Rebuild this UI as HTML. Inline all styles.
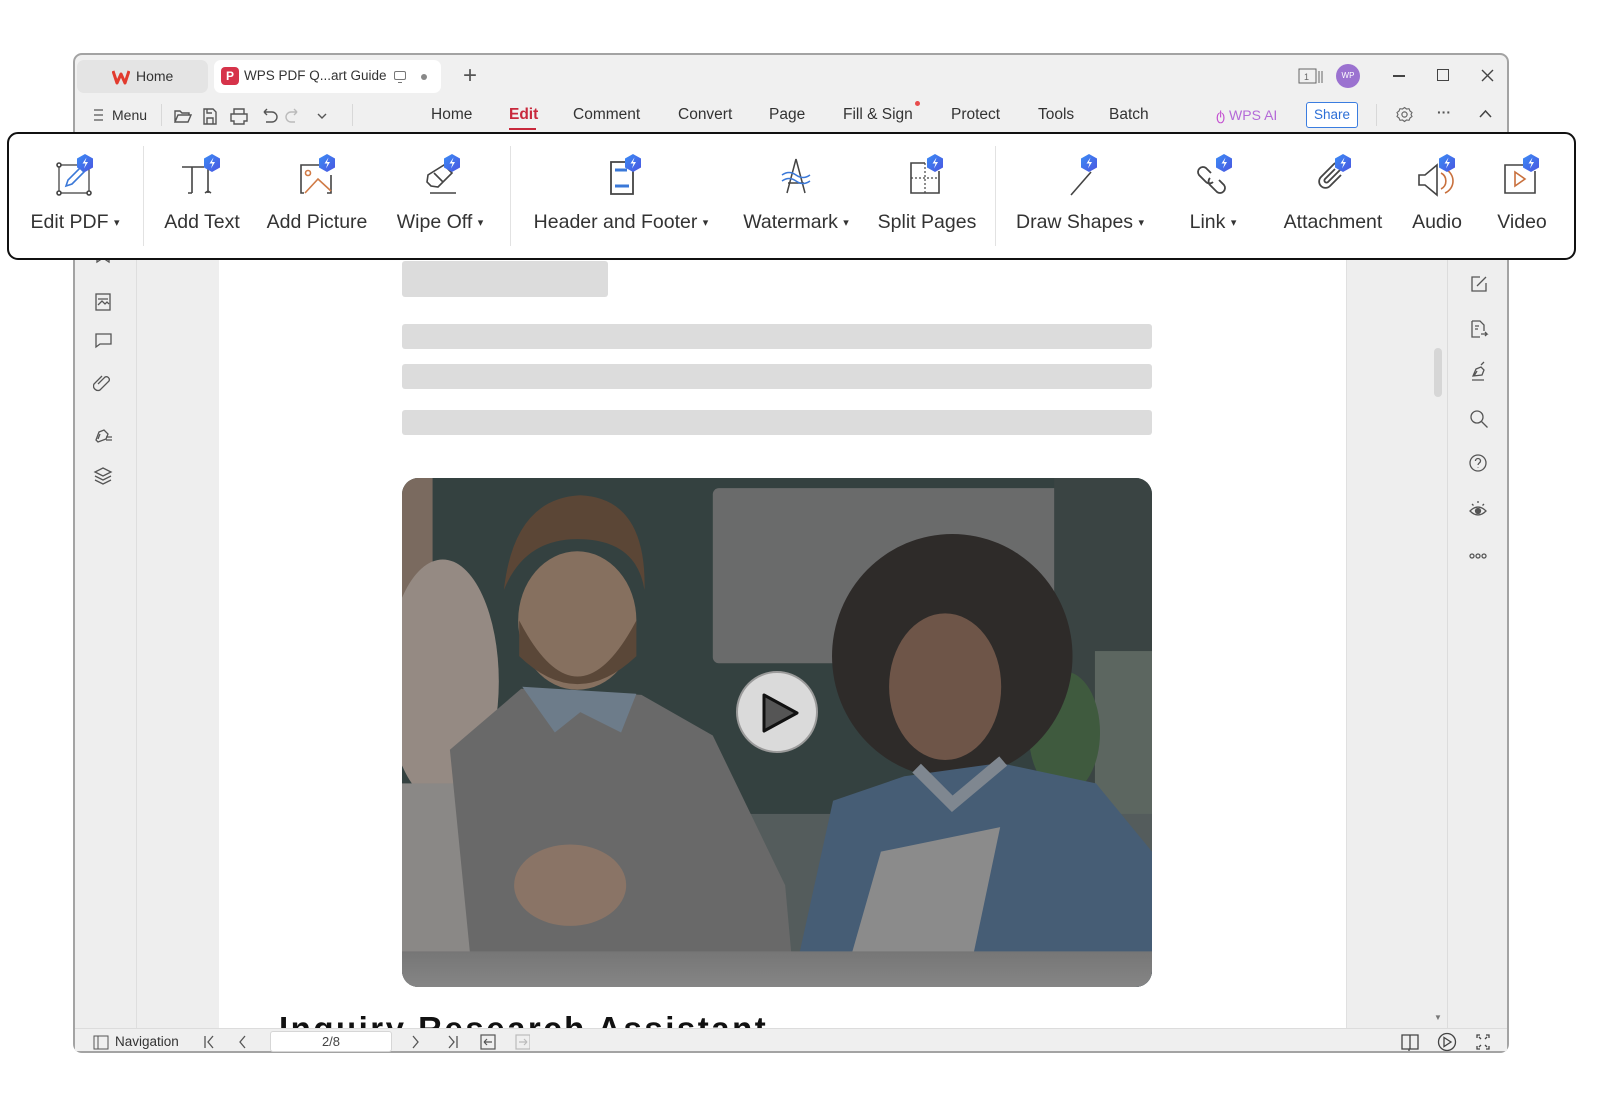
<!DOCTYPE html>
<html><head><meta charset="utf-8"><style>
*{margin:0;padding:0;box-sizing:border-box}
body{width:1600px;height:1100px;background:#fff;position:relative;overflow:hidden;font-family:"Liberation Sans",sans-serif;color:#333}
.a{position:absolute}
.win{left:73px;top:53px;width:1436px;height:1000px;border:2px solid #a3a3a3;border-radius:9px;background:#f0f0f0;overflow:hidden}
.t{position:absolute;font-size:14px;color:#333;white-space:nowrap}
.m{position:absolute;top:106px;font-size:15.5px;color:#333;white-space:nowrap}
.lbl{position:absolute;top:211px;font-size:19.5px;color:#333;white-space:nowrap;transform:translateX(-50%)}
.ic{position:absolute;top:153px;width:44px;height:44px}
.sep{position:absolute;top:146px;width:1px;height:100px;background:#e2e2e2}
.bar{position:absolute;background:#dcdcdc;border-radius:3px}
.car{font-size:11px;vertical-align:2px}
</style></head><body>
<div class="a win"></div>
<!-- tabs -->
<div class="a" style="left:77px;top:60px;width:131px;height:33px;background:#e4e4e4;border-radius:7px"></div>
<svg class="a" style="left:112px;top:69px" width="18" height="16" viewBox="0 0 18 16"><path d="M1 2 L5 14 L9 5 L13 14 L17 2" fill="none" stroke="#e23b2e" stroke-width="3" stroke-linejoin="round"/></svg>
<div class="t" style="left:136px;top:68px">Home</div>
<div class="a" style="left:214px;top:60px;width:227px;height:33px;background:#fff;border-radius:7px"></div>
<div class="a" style="left:221px;top:67px;width:18px;height:18px;background:#d6334a;border-radius:4px;color:#fff;font-size:12px;font-weight:bold;text-align:center;line-height:18px">P</div>
<div class="t" style="left:244px;top:68px;font-size:13.5px">WPS PDF Q...art Guide</div>
<svg class="a" style="left:393px;top:70px" width="14" height="14"><rect x="1.5" y="1.5" width="11" height="8" rx="1.5" fill="none" stroke="#777"/><path d="M5 12.5h4" stroke="#777"/></svg>
<div class="a" style="left:421px;top:74px;width:6px;height:6px;border-radius:3px;background:#888"></div>
<div class="t" style="left:463px;top:62px;font-size:24px;color:#555">+</div>
<!-- top right -->
<svg class="a" style="left:1298px;top:67px" width="26" height="18"><rect x="1" y="2" width="17" height="14" fill="none" stroke="#666"/><text x="6" y="13" font-size="9" fill="#666" font-family="Liberation Sans">1</text><path d="M21 4v12M24 4v12" stroke="#666"/></svg>
<div class="a" style="left:1336px;top:64px;width:24px;height:24px;border-radius:12px;background:#9b72d0;color:#fff;font-size:8px;text-align:center;line-height:24px">WP</div>
<div class="a" style="left:1393px;top:75px;width:12px;height:1.5px;background:#444"></div>
<div class="a" style="left:1437px;top:69px;width:12px;height:12px;border:1.5px solid #444"></div>
<svg class="a" style="left:1481px;top:69px" width="13" height="13"><path d="M1 1L12 12M12 1L1 12" stroke="#444" stroke-width="1.4"/></svg>
<!-- menu row -->
<svg class="a" style="left:93px;top:108px" width="12" height="14"><path d="M1 2h9M1 7h9M1 12h9" stroke="#555" stroke-width="1.3"/></svg>
<div class="t" style="left:112px;top:107px">Menu</div>
<div class="a" style="left:161px;top:104px;width:1px;height:22px;background:#d8d8d8"></div>
<svg class="a" style="left:172px;top:104px" width="180" height="24" viewBox="0 0 180 24" fill="none" stroke="#555" stroke-width="1.4">
<path d="M3 18V7h5l2 2h7v2M3 18l3-7h13l-3 7z"/>
<path d="M32 5h9l3 3v12H32zM35 20v-6h6v6M35 5v4h5"/>
<path d="M62 10V5h10v5M59 10h16v7h-3v3H62v-3h-3z"/>
<path d="M92 8h8a5 5 0 010 10h-6M92 8l3-3M92 8l3 3"/>
<path d="M125 8h-6a5 5 0 000 10h4M125 8l-3-3M125 8l-3 3" stroke="#bbb"/>
<path d="M146 10l4 4 4-4"/>
</svg>
<div class="a" style="left:352px;top:104px;width:1px;height:22px;background:#d8d8d8"></div>
<div class="m" style="left:431px">Home</div>
<div class="m" style="left:509px;color:#c8283c;font-weight:bold">Edit</div>
<div class="a" style="left:509px;top:128px;width:27px;height:2px;background:#c8283c"></div>
<div class="m" style="left:573px">Comment</div>
<div class="m" style="left:678px">Convert</div>
<div class="m" style="left:769px">Page</div>
<div class="m" style="left:843px">Fill &amp; Sign</div>
<div class="a" style="left:915px;top:101px;width:5px;height:5px;border-radius:3px;background:#e84c4c"></div>
<div class="m" style="left:951px">Protect</div>
<div class="m" style="left:1038px">Tools</div>
<div class="m" style="left:1109px">Batch</div>
<div class="t" style="left:1216px;top:107px;color:#b46ad8"><span style="color:#c34fd0">ტ</span> WPS AI</div>
<div class="a" style="left:1306px;top:102px;width:52px;height:26px;border:1px solid #3b7de0;border-radius:3px;color:#2d6fd6;font-size:13.5px;text-align:center;line-height:24px;background:#fff">Share</div>
<div class="a" style="left:1376px;top:104px;width:1px;height:22px;background:#d8d8d8"></div>
<svg class="a" style="left:1396px;top:106px" width="17" height="17"><circle cx="8.5" cy="8.5" r="2.6" fill="none" stroke="#666" stroke-width="1.2"/><path d="M8.5 1.5l2 1.5 2.5-.3 1 2.3 2 1.5-1 2 1 2-2 1.5-1 2.3-2.5-.3-2 1.5-2-1.5-2.5.3-1-2.3-2-1.5 1-2-1-2 2-1.5 1-2.3 2.5.3z" fill="none" stroke="#666" stroke-width="1.1"/></svg>
<div class="t" style="left:1437px;top:104px;font-weight:bold;color:#555">···</div>
<svg class="a" style="left:1479px;top:109px" width="13" height="9"><path d="M1 8l5.5-6 5.5 6" fill="none" stroke="#444" stroke-width="1.5"/></svg>

<!-- body panels -->
<div class="a" style="left:75px;top:259px;width:61px;height:769px;background:#eeeeee"></div>
<div class="a" style="left:136px;top:259px;width:1px;height:769px;background:#dedede"></div>
<div class="a" style="left:137px;top:259px;width:82px;height:769px;background:#eeeeee"></div>
<div class="a" style="left:219px;top:259px;width:1127px;height:769px;background:#fff;overflow:hidden">
  <div class="bar" style="left:183px;top:2px;width:206px;height:36px"></div>
  <div class="bar" style="left:183px;top:65px;width:750px;height:25px"></div>
  <div class="bar" style="left:183px;top:105px;width:750px;height:25px"></div>
  <div class="bar" style="left:183px;top:151px;width:750px;height:25px"></div>
  <div class="a" style="left:60px;top:751px;font-size:33px;font-weight:bold;color:#111;letter-spacing:2.5px;white-space:nowrap">Inquiry Research Assistant</div>
</div>
<!-- photo -->
<svg class="a" style="left:402px;top:478px" width="750" height="509" viewBox="0 0 736 500" preserveAspectRatio="none">
<defs><clipPath id="cp"><rect width="736" height="500" rx="16"/></clipPath>
<linearGradient id="tb" x1="0" y1="0" x2="0" y2="1"><stop offset="0" stop-color="#767676"/><stop offset="1" stop-color="#858585"/></linearGradient></defs>
<g clip-path="url(#cp)">
<rect width="736" height="500" fill="#344140"/>
<rect x="305" y="10" width="378" height="172" rx="6" fill="#6a6b6b"/>
<rect x="640" y="0" width="96" height="500" fill="#3a4443"/>
<rect x="680" y="170" width="56" height="300" fill="#5c6660"/>
<ellipse cx="650" cy="250" rx="35" ry="60" fill="#3f5a3e"/>
<rect x="0" y="330" width="736" height="170" fill="#545c5c"/>
<rect x="0" y="0" width="30" height="120" fill="#7a6a5f"/>
<ellipse cx="40" cy="200" rx="55" ry="120" fill="#958a83"/>
<rect x="0" y="300" width="90" height="200" fill="#8a8886"/>
<path d="M47 267 L117 207 L235 213 L305 253 L376 400 L385 500 L70 500 Z" fill="#696969"/>
<path d="M118 205 L150 250 L175 230 L215 250 L230 212 Z" fill="#6d7c8a"/>
<ellipse cx="172" cy="140" rx="58" ry="68" fill="#86705f"/>
<path d="M115 140 Q172 250 230 140 L230 175 Q172 230 115 175Z" fill="#5a4738"/>
<path d="M100 110 Q110 20 175 17 Q240 20 238 110 Q230 60 172 60 Q120 60 100 110Z" fill="#5b4636"/>
<ellipse cx="165" cy="400" rx="55" ry="40" fill="#8a7466"/>
<ellipse cx="540" cy="175" rx="118" ry="120" fill="#2e2b29"/>
<path d="M390 467 L423 317 L493 293 L587 280 L681 300 L736 367 L736 500 L390 500Z" fill="#465d75"/>
<ellipse cx="533" cy="205" rx="55" ry="72" fill="#6e5548"/>
<path d="M505 285 L540 320 L590 278" fill="none" stroke="#7f8790" stroke-width="12"/>
<path d="M470 367 L587 343 L554 500 L432 500Z" fill="#8b8b8b"/>
<rect x="0" y="465" width="736" height="35" fill="url(#tb)"/>
</g></svg>
<div class="a" style="left:736px;top:671px;width:82px;height:82px;border-radius:41px;background:#dadada;border:2px solid #9a9a9a"></div>
<svg class="a" style="left:757px;top:690px" width="46" height="46"><path d="M7 5 L40 23 L7 41 Z" fill="#555" stroke="#111" stroke-width="3" stroke-linejoin="round"/></svg>

<div class="a" style="left:1346px;top:259px;width:101px;height:769px;background:#eeeeee;border-left:1px solid #e0e0e0"></div>
<div class="a" style="left:1447px;top:259px;width:60px;height:769px;background:#eeeeee;border-left:1px solid #dcdcdc"></div>
<div class="a" style="left:1434px;top:348px;width:8px;height:49px;border-radius:4px;background:#d6d6d6"></div>
<div class="a" style="left:1434px;top:1013px;font-size:8px;color:#777">▼</div>

<!-- left icons -->
<svg class="a" style="left:93px;top:248px" width="22" height="250" fill="none" stroke="#555" stroke-width="1.3">
<path d="M4 2v12l6-4 6 4V2"/>
<rect x="3" y="46" width="14" height="16"/><path d="M5 57l4-4 3 3 2-2 2 2M5 51h10"/>
<path d="M3 86h15v10H7l-4 3z"/>
<path d="M5 140l7-7a3 3 0 014 4l-9 9a4.5 4.5 0 01-6-6l8-8" transform="translate(0,-4)"/>
<path d="M3 192l3-8 5-2 4 4-2 5-8 3zM7 186l-2 5M13 189h6M13 192h6"/>
<path d="M10 220l8 4-8 4-8-4zM2 228l8 4 8-4M2 232l8 4 8-4"/>
</svg>
<!-- right icons -->
<svg class="a" style="left:1468px;top:274px" width="22" height="295" fill="none" stroke="#555" stroke-width="1.3">
<path d="M12 3H4v14h14V9M9 12l9-9"/>
<path d="M4 47h8l4 4v6M4 47v16h8M7 52h4M7 55h3M13 60h6l-2-2M19 60l-2 2"/>
<path d="M5 102l3-7 5-2 3 3-2 5zM9 97l-3 5M4 106h12M13 91l3-3"/>
<circle cx="9" cy="143" r="6"/><path d="M13.5 147.5l6 6"/>
<circle cx="10" cy="189" r="8"/><path d="M7.5 187a2.5 2.5 0 115 0c0 2-2.5 2-2.5 4M10 193v.5"/>
<path d="M2 237q8-8 16 0q-8 8-16 0z"/><circle cx="10" cy="237" r="2.5" fill="#555"/><path d="M10 227v2M4 230l1.5 1.5M16 230l-1.5 1.5"/>
<circle cx="4" cy="282" r="2"/><circle cx="10" cy="282" r="2"/><circle cx="16" cy="282" r="2"/>
</svg>

<!-- status bar -->
<div class="a" style="left:75px;top:1028px;width:1432px;height:23px;background:#efefef;border-top:1px solid #dcdcdc"></div>
<svg class="a" style="left:93px;top:1035px" width="16" height="15"><rect x="1" y="1" width="14" height="13" fill="none" stroke="#555"/><path d="M5 1v13" stroke="#555"/></svg>
<div class="t" style="left:115px;top:1034px;font-size:13.5px">Navigation</div>
<svg class="a" style="left:203px;top:1034px" width="270" height="16" fill="none" stroke="#555" stroke-width="1.3">
<path d="M2 2v12M10 2l-5 6 5 6M42 2l-5 6 5 6M210 2l5 6-5 6M246 2l5 6-5 6M254 2v12"/>
</svg>
<div class="a" style="left:270px;top:1031px;width:122px;height:21px;background:#fff;border:1px solid #d6d6d6;border-radius:3px;text-align:center;font-size:13px;line-height:19px;color:#444">2/8</div>
<svg class="a" style="left:480px;top:1034px" width="50" height="16" fill="none" stroke-width="1.2"><rect x="1" y="1" width="14" height="14" stroke="#555"/><path d="M4 8h8M4 8l3-3M4 8l3 3" stroke="#555"/><rect x="36" y="1" width="14" height="14" stroke="#bbb"/><path d="M47 8h-8M47 8l-3-3M47 8l-3 3" stroke="#bbb"/></svg>
<svg class="a" style="left:1400px;top:1032px" width="100" height="20" fill="none" stroke="#444" stroke-width="1.3">
<path d="M2 3h8v14H2zM10 3h8v14h-8M9 17v2"/>
<circle cx="47" cy="10" r="8.5"/><path d="M44 5.5l7 4.5-7 4.5z"/>
<path d="M77 6V3h3M86 3h3v3M89 14v3h-3M80 17h-3v-3M81 7l-2-2M85 7l2-2M85 13l2 2M81 13l-2 2"/>
</svg>

<!-- toolbar -->
<div class="a" style="left:7px;top:132px;width:1569px;height:128px;border:2.5px solid #111;border-radius:11px;background:#fff"></div>
<div class="sep" style="left:143px"></div>
<div class="sep" style="left:510px"></div>
<div class="sep" style="left:995px"></div>

<svg width="0" height="0" style="position:absolute"><defs>
<linearGradient id="bg" x1="0" y1="0" x2="1" y2="1"><stop offset="0" stop-color="#3b8cf5"/><stop offset="1" stop-color="#4a55e0"/></linearGradient>
<g id="bd"><path d="M32 1l8 4.5v9L32 19l-8-4.5v-9z" fill="url(#bg)"/><path d="M33.5 4.5L29.5 10.5h3l-1.5 5 4-6.5h-3z" fill="#fff"/></g>
</defs></svg>

<svg class="ic" style="left:53px" viewBox="0 0 44 44" fill="none" stroke="#444" stroke-width="1.6">
<rect x="6" y="12" width="30" height="28" stroke-width="1.3"/><circle cx="6" cy="12" r="2" fill="#fff"/><circle cx="6" cy="40" r="2" fill="#fff"/><circle cx="36" cy="40" r="2" fill="#fff"/>
<path d="M13 33l2-6 12-12 4 4-12 12z" stroke="#3a78d8"/><use href="#bd" stroke="none"/></svg>
<div class="lbl" style="left:75px">Edit PDF <span class="car">▾</span></div>
<svg class="ic" style="left:180px" viewBox="0 0 44 44" fill="none" stroke="#444" stroke-width="1.6">
<path d="M2 14h22M12 14v26M8 40h4M28 14v26M25 40l3-2 3 2"/><use href="#bd" stroke="none"/></svg>
<div class="lbl" style="left:202px">Add Text</div>
<svg class="ic" style="left:295px" viewBox="0 0 44 44" fill="none" stroke="#444" stroke-width="1.6">
<path d="M24 12H6v28h3M36 22v18h-4"/><circle cx="13" cy="20" r="2.5" stroke="#d07a45"/><path d="M10 40l13-14 13 12" stroke="#d07a45"/><use href="#bd" stroke="none"/></svg>
<div class="lbl" style="left:317px">Add Picture</div>
<svg class="ic" style="left:420px" viewBox="0 0 44 44" fill="none" stroke="#444" stroke-width="1.6">
<path d="M24 12l8 8-14 14-7-1-4-4 1-7zM14 20l9 9M10 40h26"/><use href="#bd" stroke="none"/></svg>
<div class="lbl" style="left:440px">Wipe Off <span class="car">▾</span></div>
<svg class="ic" style="left:601px" viewBox="0 0 44 44" fill="none" stroke="#444" stroke-width="1.8">
<path d="M26 9H10v32h22V16"/><path d="M14 17h12M14 33h14" stroke="#3a78d8" stroke-width="3"/><use href="#bd" stroke="none"/></svg>
<div class="lbl" style="left:621px">Header and Footer <span class="car">▾</span></div>
<svg class="ic" style="left:774px" viewBox="0 0 44 44" fill="none" stroke="#444" stroke-width="1.5">
<path d="M22 6l-9 34M22 6l9 34M14 30h16"/><path d="M8 22q7-5 14 0t14 0M8 28q7-5 14 0t14 0" stroke="#3a78d8"/></svg>
<div class="lbl" style="left:796px">Watermark <span class="car">▾</span></div>
<svg class="ic" style="left:903px" viewBox="0 0 44 44" fill="none" stroke="#444" stroke-width="1.6">
<path d="M22 10H8v30h28V18"/><path d="M22 10v30M8 25h28" stroke-dasharray="2 2" stroke-width="1.2"/><use href="#bd" stroke="none"/></svg>
<div class="lbl" style="left:927px">Split Pages</div>
<svg class="ic" style="left:1063px" viewBox="0 0 44 44" fill="none" stroke="#444" stroke-width="1.6">
<path d="M28 19L8 42"/><use href="#bd" stroke="none" transform="translate(-6,0)"/></svg>
<div class="lbl" style="left:1080px">Draw Shapes <span class="car">▾</span></div>
<svg class="ic" style="left:1192px" viewBox="0 0 44 44" fill="none" stroke="#444" stroke-width="1.8">
<path d="M19 20l-5-5a5 5 0 00-7 7l7 7a5 5 0 007 0"/><path d="M23 23l5 5a5 5 0 01-7 7l-7-7a5 5 0 010-7" transform="translate(4,4)"/><use href="#bd" stroke="none"/></svg>
<div class="lbl" style="left:1213px">Link <span class="car">▾</span></div>
<svg class="ic" style="left:1311px" viewBox="0 0 44 44" fill="none" stroke="#444" stroke-width="1.8">
<path d="M30 22L19 33a6 6 0 01-9-9l13-13a4 4 0 016 6L17 29a2 2 0 01-3-3l10-10"/><use href="#bd" stroke="none"/></svg>
<div class="lbl" style="left:1333px">Attachment</div>
<svg class="ic" style="left:1415px" viewBox="0 0 44 44" fill="none" stroke="#444" stroke-width="1.6">
<path d="M4 22h6l12-10v30l-12-10H4z"/><path d="M26 20a9 9 0 010 16M30 16a13 13 0 010 24" stroke="#c8703d"/><use href="#bd" stroke="none"/></svg>
<div class="lbl" style="left:1437px">Audio</div>
<svg class="ic" style="left:1499px" viewBox="0 0 44 44" fill="none" stroke="#444" stroke-width="1.6">
<path d="M24 12H6v28h30V18"/><path d="M16 19l10 7-10 7z" stroke="#c8703d"/><use href="#bd" stroke="none"/></svg>
<div class="lbl" style="left:1522px">Video</div>
</body></html>
